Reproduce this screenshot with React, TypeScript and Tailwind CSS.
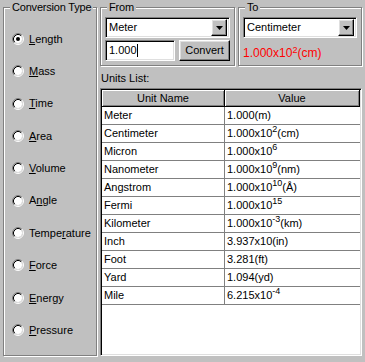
import React from 'react'

const font = { fontFamily: '"Liberation Sans", Arial, sans-serif' }

const sunken =
  'border border-t-[#808080] border-l-[#808080] border-b-white border-r-white shadow-[inset_1px_1px_0_#000,inset_-1px_-1px_0_#dfdfdf]'
const raised =
  'border border-t-white border-l-white border-b-black border-r-black shadow-[inset_-1px_-1px_0_#808080,inset_1px_1px_0_#dfdfdf]'
const etched = 'border border-[#808080] shadow-[inset_1px_1px_0_#fff,1px_1px_0_#fff]'

const Radio = ({ checked }: { checked?: boolean }) => (
  <svg width="12" height="12" viewBox="0 0 12 12" className="shrink-0">
    <circle cx="6" cy="6" r="4" fill="#fff" />
    <path d="M2.11 9.89 A5.5 5.5 0 0 1 9.89 2.11" stroke="#808080" fill="none" />
    <path d="M9.89 2.11 A5.5 5.5 0 0 1 2.11 9.89" stroke="#fff" fill="none" />
    <path d="M2.82 9.18 A4.5 4.5 0 0 1 9.18 2.82" stroke="#000" fill="none" />
    <path d="M9.18 2.82 A4.5 4.5 0 0 1 2.82 9.18" stroke="#dfdfdf" fill="none" />
    {checked && <circle cx="6" cy="6" r="2" fill="#000" />}
  </svg>
)

const Group = ({ title, className, children }: { title: string, className?: string, children?: React.ReactNode }) => (
  <div className={`relative ${etched} ${className ?? ''}`}>
    <span className="absolute left-[6px] -top-[8px] whitespace-nowrap bg-[#c0c0c0] px-[2px] leading-[14px] tracking-[-0.2px]">
      {title}
    </span>
    {children}
  </div>
)

const Combo = ({ value }: { value: string }) => (
  <div className={`flex h-[21px] items-center bg-white pl-[3px] pr-[2px] ${sunken}`}>
    <span className="flex-1">{value}</span>
    <div className={`flex h-[17px] w-[16px] items-center justify-center bg-[#c0c0c0] ${raised}`}>
      <svg width="7" height="4" viewBox="0 0 7 4">
        <path d="M0 0h7L3.5 4z" fill="#000" />
      </svg>
    </div>
  </div>
)

const Sup = ({ children }: { children: React.ReactNode }) => (
  <span className="relative -top-[4px] text-[9px]">{children}</span>
)

const types: [string, string, string][] = [
  ['', 'L', 'ength'],
  ['', 'M', 'ass'],
  ['', 'T', 'ime'],
  ['', 'A', 'rea'],
  ['', 'V', 'olume'],
  ['A', 'n', 'gle'],
  ['Tempe', 'r', 'ature'],
  ['', 'F', 'orce'],
  ['', 'E', 'nergy'],
  ['', 'P', 'ressure'],
]

const rows: [string, React.ReactNode][] = [
  ['Meter', <>1.000(m)</>],
  ['Centimeter', <>1.000x10<Sup>2</Sup>(cm)</>],
  ['Micron', <>1.000x10<Sup>6</Sup></>],
  ['Nanometer', <>1.000x10<Sup>9</Sup>(nm)</>],
  ['Angstrom', <>1.000x10<Sup>10</Sup>(Å)</>],
  ['Fermi', <>1.000x10<Sup>15</Sup></>],
  ['Kilometer', <>1.000x10<Sup>-3</Sup>(km)</>],
  ['Inch', <>3.937x10(in)</>],
  ['Foot', <>3.281(ft)</>],
  ['Yard', <>1.094(yd)</>],
  ['Mile', <>6.215x10<Sup>-4</Sup></>],
]

const App = () => {
  return (
    <div
      className="flex h-[362px] w-[365px] gap-[3px] bg-[#c0c0c0] pb-[6px] pl-[3px] pr-[3px] pt-[7px] text-[11px] text-black"
      style={font}
    >
      {/* left: conversion type */}
      <Group title="Conversion Type" className="w-[94px]">
        <div className="flex flex-col gap-[16.35px] pl-[8px] pt-[23px]">
          {types.map(([a, u, b], i) => (
            <div key={i} className="flex h-[16px] items-center gap-[5px]">
              <Radio checked={i === 0} />
              <span className="whitespace-nowrap">
                {a}
                <u>{u}</u>
                {b}
              </span>
            </div>
          ))}
        </div>
      </Group>

      {/* right side */}
      <div className="flex flex-1 flex-col">
        <div className="flex h-[59px] gap-[3px]">
          <Group title="From" className="w-[135px]">
            <div className="flex flex-col gap-[2px] px-[4px] pt-[9px]">
              <Combo value="Meter" />
              <div className="flex gap-[4px]">
                <div className={`flex h-[21px] w-[70px] items-center bg-white pl-[3px] ${sunken}`}>
                  <span>1.000</span>
                  <span className="h-[13px] w-px bg-black" />
                </div>
                <div className={`flex h-[21px] flex-1 items-center justify-center bg-[#c0c0c0] ${raised}`}>
                  Convert
                </div>
              </div>
            </div>
          </Group>
          <Group title="To" className="flex-1">
            <div className="flex flex-col px-[4px] pt-[9px]">
              <Combo value="Centimeter" />
              <div className="pt-[8px] text-[12px] leading-[14px] text-[#ff0000]">
                1.000x10<Sup>2</Sup>(cm)
              </div>
            </div>
          </Group>
        </div>

        <div className="pl-[1px] pt-[5px] leading-[15px]">Units List:</div>

        <div className={`mt-[2px] flex flex-1 flex-col bg-white p-[1px] ${sunken}`}>
          <div className="grid grid-cols-[123px_1fr] bg-[#c0c0c0]">
            <div className="flex h-[17px] items-center justify-center border-b border-r border-b-black border-r-black shadow-[inset_1px_1px_0_#fff,inset_-1px_-1px_0_#808080]">
              Unit Name
            </div>
            <div className="flex h-[17px] items-center justify-center border-b border-r border-b-black border-r-black shadow-[inset_1px_1px_0_#fff,inset_-1px_-1px_0_#808080]">
              Value
            </div>
          </div>
          {rows.map(([name, val]) => (
            <div key={name} className="grid h-[18px] grid-cols-[123px_1fr] border-b border-[#808080]">
              <div className="flex items-center border-r border-[#808080] pl-[2px]">{name}</div>
              <div className="flex items-center whitespace-nowrap pl-[2px]">{val}</div>
            </div>
          ))}
        </div>
      </div>
    </div>
  )
}

export default App
